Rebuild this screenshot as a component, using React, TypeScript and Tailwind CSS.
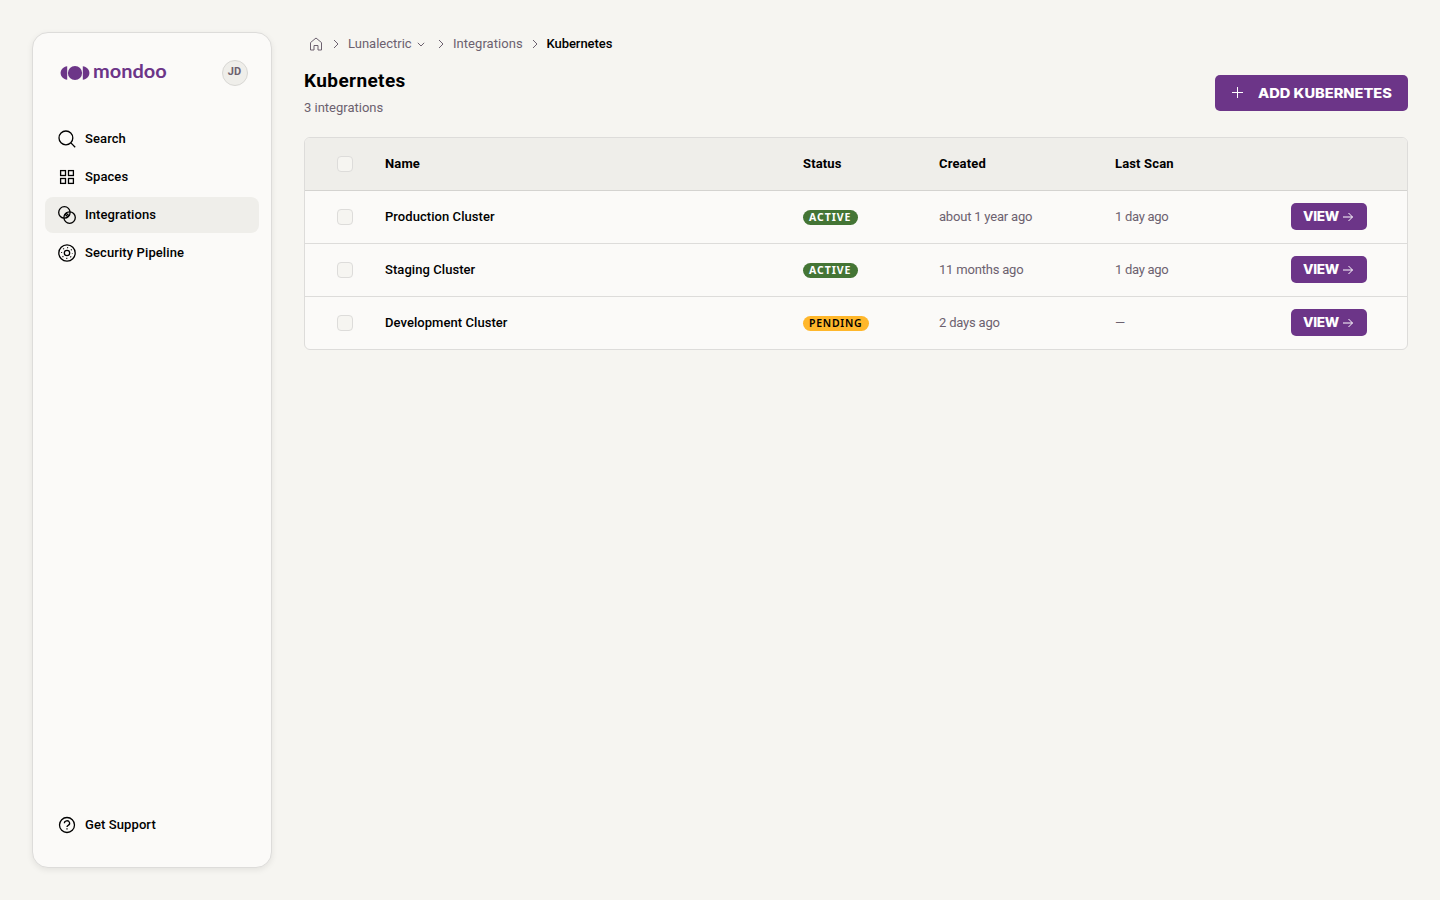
import type { ReactNode } from "react"

type Status = "ACTIVE" | "PENDING"

interface Cluster {
  name: string
  status: Status
  created: string
  lastScan: string
}

const clusters: Cluster[] = [
  { name: "Production Cluster", status: "ACTIVE", created: "about 1 year ago", lastScan: "1 day ago" },
  { name: "Staging Cluster", status: "ACTIVE", created: "11 months ago", lastScan: "1 day ago" },
  { name: "Development Cluster", status: "PENDING", created: "2 days ago", lastScan: "—" },
]

const GRID = "grid grid-cols-[80px_418px_136px_176px_176px_1fr] items-center"

function Icon({ children }: { children: ReactNode }) {
  return (
    <svg
      viewBox="0 0 20 20"
      fill="none"
      stroke="currentColor"
      strokeWidth="1.3"
      className="h-5 w-5 shrink-0"
      aria-hidden="true"
    >
      {children}
    </svg>
  )
}

function SearchIcon() {
  return (
    <Icon>
      <circle cx="8.9" cy="8.9" r="6.9" />
      <path d="M13.9 13.9l4.3 4.3" />
    </Icon>
  )
}

function SpacesIcon() {
  return (
    <Icon>
      <rect x="3.6" y="3.6" width="4.9" height="4.9" />
      <rect x="11.5" y="3.6" width="4.9" height="4.9" />
      <rect x="3.6" y="11.5" width="4.9" height="4.9" />
      <rect x="11.5" y="11.5" width="4.9" height="4.9" />
    </Icon>
  )
}

function IntegrationsIcon() {
  return (
    <Icon>
      <circle cx="7.4" cy="7.4" r="5.7" />
      <circle cx="12.6" cy="12.6" r="5.7" />
      <path d="M7.6 10l2.4-2.4M8.7 11.3l2.6-2.6M10 12.4l2.4-2.4" />
    </Icon>
  )
}

function PipelineIcon() {
  return (
    <Icon>
      <circle cx="10" cy="10" r="8.2" />
      <circle cx="10" cy="10" r="2.7" />
      <circle cx="10" cy="10" r="5.4" strokeWidth="1.1" strokeDasharray="1.1 3.14" strokeDashoffset="0.55" />
    </Icon>
  )
}

function SupportIcon() {
  return (
    <Icon>
      <circle cx="10" cy="10" r="7.5" />
      <path d="M7.4 8.3a2.6 2.4 0 1 1 3.8 2c-.8.4-1.2.8-1.2 1.6" />
      <path d="M10 13.2v1.4" />
    </Icon>
  )
}

function Logo() {
  return (
    <div className="flex items-center text-[#6c3588]">
      <svg viewBox="0 0 30 16" className="h-4 w-[30px]" fill="currentColor" aria-hidden="true">
        <path d="M7.2 1.2v13.6C3.4 14.300.6 11.500.6 8S3.400 1.700 7.200 1.200z" />
        <circle cx="15" cy="8" r="7.1" />
        <path d="M22.8 1.2v13.6c3.800-.5 6.600-3.300 6.600-6.800s-2.800-6.300-6.600-6.800z" />
      </svg>
      <span className="mt-[-3px] ml-[3px] w-[73px] [font-family:Lato,sans-serif] text-[19px] leading-5 font-bold">
        <span className="inline-block origin-left scale-x-[1.05]">mondoo</span>
      </span>
    </div>
  )
}

function NavItem({ icon, label, active }: { icon: ReactNode; label: string; active?: boolean }) {
  return (
    <a
      href="#"
      className={`flex h-9 items-center gap-2 rounded-lg px-3 text-[13px] font-medium tracking-[0.1px] text-black ${active ? "bg-[#efeeea]" : ""}`}
    >
      {icon}
      <span>{label}</span>
    </a>
  )
}

function Sidebar() {
  return (
    <aside className="flex w-60 shrink-0 flex-col rounded-2xl border border-[#dddcda] bg-[#fbfaf8] px-3 pb-6 shadow-[0_2px_6px_rgba(0,0,0,0.08)]">
      <div className="flex h-[79px] items-center justify-between pr-[11px] pl-[15px]">
        <Logo />
        <div className="flex h-[26px] w-[26px] items-center justify-center rounded-full border border-[#d8d7d4] bg-[#efeeea] pr-px text-[11px] font-bold text-[#6c616f]">
          JD
        </div>
      </div>
      <nav className="mt-[9px] flex flex-col gap-0.5">
        <NavItem icon={<SearchIcon />} label="Search" />
        <NavItem icon={<SpacesIcon />} label="Spaces" />
        <NavItem icon={<IntegrationsIcon />} label="Integrations" active />
        <NavItem icon={<PipelineIcon />} label="Security Pipeline" />
      </nav>
      <div className="mt-auto">
        <NavItem icon={<SupportIcon />} label="Get Support" />
      </div>
    </aside>
  )
}

function Separator() {
  return (
    <svg viewBox="0 0 6 10" className="h-2.5 w-1.5 shrink-0" fill="none" stroke="currentColor" aria-hidden="true">
      <path d="M1 1l4 4-4 4" />
    </svg>
  )
}

function Breadcrumbs() {
  return (
    <nav className="flex h-6 items-center pl-[5px] text-[13px] text-[#6c616f]">
      <svg viewBox="0 0 14 14" className="h-3.5 w-3.5" fill="none" stroke="currentColor" aria-hidden="true">
        <path d="M1.5 5.6L7 1l5.5 4.6V13H9V8.5H5V13H1.5z" />
      </svg>
      <span className="ml-[10px] flex">
        <Separator />
      </span>
      <span className="ml-[9px] w-[65px]">Lunalectric</span>
      <svg viewBox="0 0 8 5" className="ml-1 h-[5px] w-2" fill="none" stroke="currentColor" aria-hidden="true">
        <path d="M.8.8L4 4 7.2.8" />
      </svg>
      <span className="ml-[13px] flex">
        <Separator />
      </span>
      <span className="ml-[9px] w-[70px] tracking-[0.05px]">Integrations</span>
      <span className="ml-[9px] flex">
        <Separator />
      </span>
      <span className="ml-[8.5px] font-medium tracking-[-0.05px] text-black">Kubernetes</span>
    </nav>
  )
}

function Checkbox() {
  return <span className="ml-8 h-4 w-4 rounded-[4px] border border-[#dddcda] bg-[#f6f5f1]" />
}

function StatusBadge({ status }: { status: Status }) {
  return (
    <span
      className={`inline-flex h-[15px] items-center rounded-full pl-1.5 [font-family:'Noto_Sans',sans-serif] text-[10.5px] ${
        status === "ACTIVE"
          ? "w-[55px] bg-[#447535] font-bold tracking-[0.95px] text-white"
          : "w-[66px] bg-[#ffb72b] font-semibold tracking-[0.75px] text-black"
      }`}
    >
      {status}
    </span>
  )
}

function ClusterTable() {
  return (
    <div className="mt-[26px] overflow-hidden rounded-md border border-[#dddcda] bg-[#fbfaf8] text-[13px]">
      <div className={`${GRID} h-[53px] border-b border-[#d4d3d0] bg-[#efeeea] font-bold tracking-[0.15px] text-black`}>
        <Checkbox />
        <span>Name</span>
        <span>Status</span>
        <span>Created</span>
        <span>Last Scan</span>
      </div>
      {clusters.map((c) => (
        <div key={c.name} className={`${GRID} h-[53px] border-b border-[#dddcda] text-[#6c616f] last:h-[52px] last:border-b-0`}>
          <Checkbox />
          <span className="font-medium tracking-[0.06px] text-black">{c.name}</span>
          <span className="flex pt-px">
            <StatusBadge status={c.status} />
          </span>
          <span className="tracking-[-0.2px]">{c.created}</span>
          <span className="tracking-[-0.28px]">{c.lastScan}</span>
          <button type="button" className="mb-px flex h-[27px] w-[76px] items-center rounded-[5px] bg-[#6c3588] pl-[11px] text-white">
            <span className="w-[37px] pt-px [font-family:Inter,sans-serif] text-[13px] font-extrabold tracking-[-0.3px]">
              <span className="inline-block origin-left scale-x-105">VIEW</span>
            </span>
            <svg viewBox="0 0 12 10" className="ml-[3px] h-2.5 w-3" fill="none" stroke="currentColor" aria-hidden="true">
              <path d="M1 5h9.5M6.5 1l4 4-4 4" />
            </svg>
          </button>
        </div>
      ))}
    </div>
  )
}

export default function App() {
  return (
    <div className="flex h-[900px] gap-8 bg-[#f6f5f1] p-8 font-[Roboto,sans-serif]">
      <Sidebar />
      <main className="min-w-0 flex-1">
        <Breadcrumbs />
        <header className="mt-[11px] flex h-11 items-start justify-between">
          <div>
            <h1 className="text-[19px] leading-7 font-bold tracking-[0.4px] text-black">Kubernetes</h1>
            <p className="mt-[5px] text-[13px] leading-4 text-[#6c616f]">3 integrations</p>
          </div>
          <button type="button" className="mt-2 flex h-9 w-[193px] items-center rounded-[5px] bg-[#6c3588] pl-[17px] text-white">
            <svg viewBox="0 0 12 12" className="h-3 w-3" fill="none" stroke="currentColor" aria-hidden="true">
              <path d="M0 5.5h11M5.5 0v11" />
            </svg>
            <span className="ml-[14px] inline-block origin-left scale-x-[1.125] pt-px [font-family:Inter,sans-serif] text-[13px] font-extrabold">
              ADD KUBERNETES
            </span>
          </button>
        </header>
        <ClusterTable />
      </main>
    </div>
  )
}
